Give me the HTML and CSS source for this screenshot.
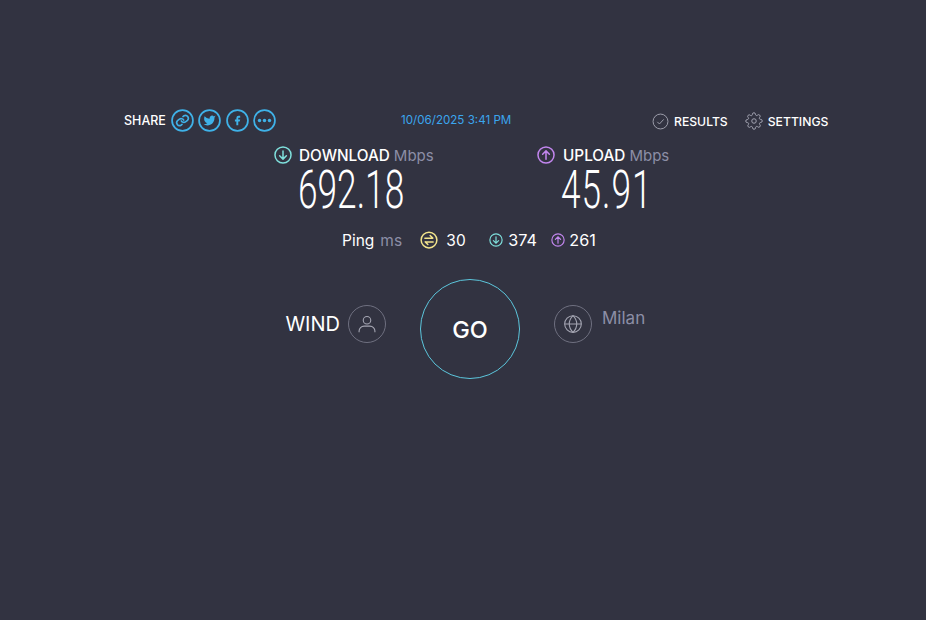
FILE: index.html
```html
<!DOCTYPE html>
<html lang="en">
<head>
    <meta charset="UTF-8">
    <meta name="viewport" content="width=device-width, initial-scale=1.0">
    <title>Speedtest Result</title>
    <link rel="stylesheet" href="styles.css">
</head>
<body>
    <div class="container">
        <div class="top-bar">
            <div class="share">
                <span class="share-label">SHARE</span>
                <svg class="share-icon" viewBox="0 0 24 24"><circle cx="12" cy="12" r="10.9"/><g class="chain" transform="rotate(8 12 12) translate(4.800 4.800) scale(.6)"><path d="M10 13a5 5 0 0 0 7.500.5l3-3a5 5 0 0 0-7-7l-1.700 1.700"/><path d="M14 11a5 5 0 0 0-7.500-.5l-3 3a5 5 0 0 0 7 7l1.700-1.700"/></g></svg>
                <svg class="share-icon" viewBox="0 0 24 24"><circle cx="12" cy="12" r="10.9"/><path class="solid" transform="translate(5.200 5.200) scale(.57)" d="M23 3a10.900 10.900 0 0 1-3 1.500 4.500 4.500 0 0 0-7.900 3v1A10.700 10.700 0 0 1 3 4s-4 9 5 13a11.600 11.600 0 0 1-7 2c9 5 20 0 20-11.500 0-.3 0-.6-.1-.8A7.700 7.700 0 0 0 23 3z"/></svg>
                <svg class="share-icon" viewBox="0 0 24 24"><circle cx="12" cy="12" r="10.9"/><path class="solid" transform="translate(5.800 6) scale(.5)" d="M18 2h-3a5 5 0 0 0-5 5v3H7v4h3v8h4v-8h3l1-4h-4V7a1 1 0 0 1 1-1h3z"/></svg>
                <svg class="share-icon" viewBox="0 0 24 24"><circle cx="12" cy="12" r="10.9"/><circle class="solid" cx="6.800" cy="12" r="1.800"/><circle class="solid" cx="12" cy="12" r="1.800"/><circle class="solid" cx="17.200" cy="12" r="1.800"/></svg>
            </div>
            <div class="date">10/06/2025 3:41 PM</div>
            <div class="links">
                <svg class="link-icon" viewBox="0 0 24 24"><circle cx="12" cy="12" r="10.500"/><path d="M7.500 12.500l3 3 6-6.500"/></svg>
                <span class="link-text">RESULTS</span>
                <svg class="link-icon gear" viewBox="0 0 24 24"><circle cx="12" cy="12" r="3"/><path d="M19.400 15a1.650 1.650 0 0 0 .33 1.820l.06.06a2 2 0 1 1-2.830 2.830l-.06-.06a1.650 1.650 0 0 0-2.800 1.170V21a2 2 0 1 1-4 0v-.09a1.650 1.650 0 0 0-2.830-1.170l-.06.06a2 2 0 1 1-2.830-2.830l.06-.06a1.650 1.650 0 0 0-1.170-2.800H3a2 2 0 1 1 0-4h.09a1.650 1.650 0 0 0 1.170-2.830l-.06-.06a2 2 0 1 1 2.830-2.830l.06.06a1.650 1.650 0 0 0 2.800-1.170V3a2 2 0 1 1 4 0v.09a1.650 1.650 0 0 0 2.830 1.170l.06-.06a2 2 0 1 1 2.830 2.830l-.06.06a1.650 1.650 0 0 0 1.170 2.800H21a2 2 0 1 1 0 4h-.09a1.650 1.650 0 0 0-1.510 1z"/></svg>
                <span class="link-text">SETTINGS</span>
            </div>
        </div>

        <div class="speeds">
            <div class="speed speed-down">
                <div class="speed-head">
                    <svg class="speed-icon" viewBox="0 0 24 24"><circle cx="12" cy="12" r="10.700"/><path d="M12 6.500v11M7.500 13l4.500 4.500 4.500-4.500"/></svg>
                    <span class="speed-name">DOWNLOAD</span>
                    <span class="speed-unit">Mbps</span>
                </div>
                <div class="speed-value">692.18</div>
            </div>
            <div class="speed speed-up">
                <div class="speed-head">
                    <svg class="speed-icon" viewBox="0 0 24 24"><circle cx="12" cy="12" r="10.700"/><path d="M12 17.500v-11M7.500 11L12 6.500l4.500 4.500"/></svg>
                    <span class="speed-name">UPLOAD</span>
                    <span class="speed-unit">Mbps</span>
                </div>
                <div class="speed-value">45.91</div>
            </div>
        </div>

        <div class="ping-row">
            <span class="ping-label">Ping</span>
            <span class="ping-unit">ms</span>
            <svg class="ping-icon" viewBox="0 0 24 24"><circle cx="12" cy="12" r="10.500"/><path d="M6.500 9.500h10.500M17 9.500L13.500 6M17.500 14.500H7M7 14.500l3.500 3.500"/></svg>
            <span class="ping-value">30</span>
            <svg class="mini-icon mini-down" viewBox="0 0 24 24"><circle cx="12" cy="12" r="10.500"/><path d="M12 6.500v11M7.500 13l4.500 4.500 4.500-4.500"/></svg>
            <span class="mini-value">374</span>
            <svg class="mini-icon mini-up" viewBox="0 0 24 24"><circle cx="12" cy="12" r="10.500"/><path d="M12 17.500v-11M7.500 11L12 6.500l4.500 4.500"/></svg>
            <span class="mini-value">261</span>
        </div>

        <div class="connection">
            <div class="isp">WIND</div>
            <div class="round-icon">
                <svg viewBox="0 0 24 24"><circle cx="12" cy="7.500" r="4.500"/><path d="M2.500 22v-1.500a6 6 0 0 1 6-6h7a6 6 0 0 1 6 6V22"/></svg>
            </div>
            <div class="go">GO</div>
            <div class="round-icon">
                <svg viewBox="0 0 24 24"><circle cx="12" cy="12" r="10"/><path d="M2 12h20M12 2c-6 6-6 14 0 20M12 2c6 6 6 14 0 20"/></svg>
            </div>
            <div class="server">Milan</div>
        </div>
    </div>
</body>
</html>
```

FILE: styles.css
```css
body {
    margin: 0;
    min-height: 620px;
    background-color: #323341;
    font-family: "Inter", "Noto Sans", sans-serif;
    color: #fff;
}
svg {
    display: block;
    flex: none;
    fill: none;
    stroke: currentColor;
}
.container {
    width: 704px;
    padding: 107px 0 0 124px;
}
.top-bar {
    display: flex;
    align-items: center;
    height: 26px;
}
.share {
    display: flex;
    flex: none;
    align-items: center;
    width: 277px;
}
.share-label {
    font-size: 12.5px;
    font-weight: 500;
    margin-right: 5px;
}
.share-icon {
    width: 23px;
    height: 23px;
    margin-right: 4.5px;
    color: #3fb2e8;
    stroke-width: 1.800;
    stroke-linecap: round;
}
.share-icon .solid {
    fill: currentColor;
    stroke: none;
}
.share-icon .chain {
    stroke-width: 2.800;
}
.date {
    flex: none;
    width: 251px;
    font-size: 11.6px;
    color: #3ba6ee;
}
.links {
    display: flex;
    flex: none;
    align-items: center;
    margin-top: 2px;
}
.link-icon {
    width: 17px;
    height: 17px;
    margin-right: 5px;
    color: #a5a6b3;
    stroke-width: 1.300;
}
.gear {
    width: 18px;
    height: 18px;
}
.link-text {
    font-size: 12.2px;
    font-weight: 500;
    margin-right: 17px;
}
.speeds {
    display: flex;
    margin: 12px 0 0 150px;
}
.speed {
    width: 263px;
}
.speed-head {
    display: flex;
    align-items: center;
    height: 20px;
}
.speed-icon {
    width: 18px;
    height: 18px;
    margin-right: 7px;
    stroke-width: 2;
    stroke-linecap: round;
    stroke-linejoin: round;
}
.speed-down .speed-icon {
    color: #7fe0dc;
}
.speed-up .speed-icon {
    color: #c286ee;
    margin-right: 8px;
}
.speed-name {
    font-size: 15.3px;
    font-weight: 500;
    margin-right: 4px;
}
.speed-unit {
    font-size: 15px;
    color: #8c8ea6;
}
.speed-value {
    margin: 0 0 0 24px;
    font-family: "Roboto", sans-serif;
    font-size: 53px;
    font-weight: 300;
    line-height: 50px;
    transform: scaleX(.665);
    transform-origin: left;
}
.speed-up .speed-value {
    letter-spacing: 1.500px;
}
.ping-row {
    display: flex;
    align-items: center;
    height: 22px;
    margin: 14px 0 0 218px;
    font-size: 15.5px;
}
.ping-label {
    margin-right: 6px;
}
.ping-unit {
    width: 23px;
    color: #8c8ea6;
    margin-right: 17px;
}
.ping-icon {
    width: 18px;
    height: 18px;
    margin-right: 8px;
    color: #f3e58c;
    stroke-width: 2;
    stroke-linecap: round;
}
.ping-value {
    width: 43px;
}
.mini-icon {
    width: 14px;
    height: 14px;
    margin-right: 5px;
    stroke-width: 2;
    stroke-linecap: round;
}
.mini-down {
    color: #7fe0dc;
}
.mini-up {
    color: #c286ee;
    margin-right: 4px;
}
.mini-value {
    width: 43px;
    font-size: 16.2px;
}
.connection {
    display: flex;
    align-items: center;
    margin-top: 28px;
}
.isp {
    width: 216px;
    margin: 0 8px 10px 0;
    font-size: 20px;
    text-align: right;
}
.round-icon {
    display: flex;
    align-items: center;
    justify-content: center;
    width: 36px;
    height: 36px;
    margin-bottom: 10px;
    border: 1px solid #6f7080;
    border-radius: 50%;
    color: #a5a6b3;
}
.round-icon svg {
    width: 20px;
    height: 20px;
    stroke-width: 1.300;
}
.go {
    display: flex;
    align-items: center;
    justify-content: center;
    width: 98px;
    height: 98px;
    margin: 0 34px;
    border: 1px solid #5cc6dc;
    border-radius: 50%;
    font-size: 23.5px;
    font-weight: 500;
}
.server {
    margin: 0 0 22px 10px;
    font-size: 17px;
    color: #8c8ea6;
}
```
